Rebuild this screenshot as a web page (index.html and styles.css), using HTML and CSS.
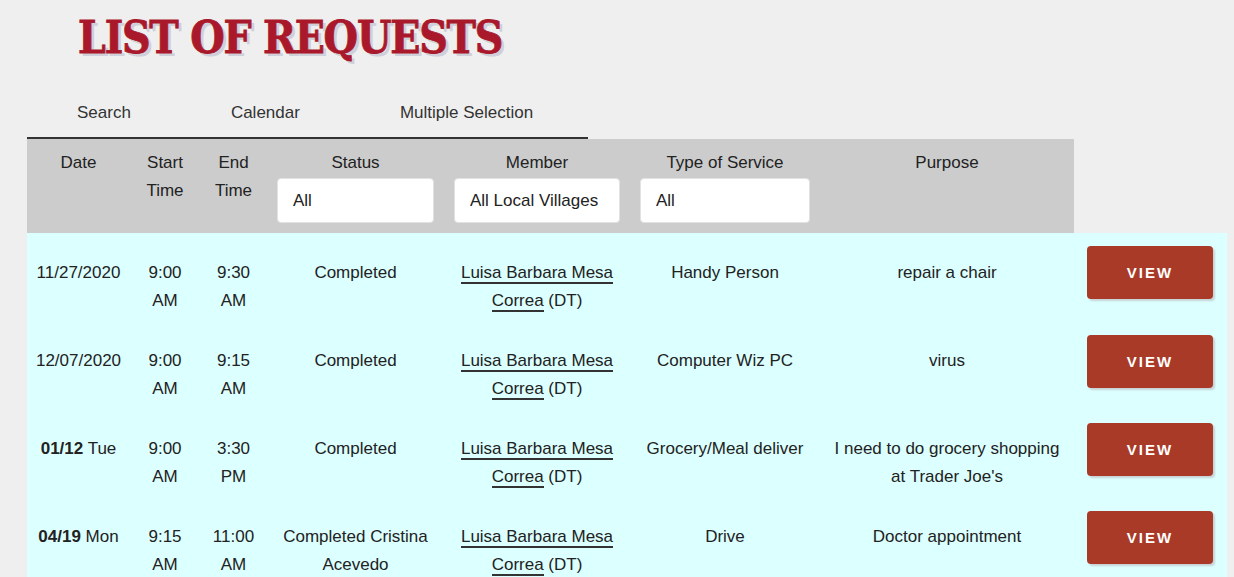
FILE: index.html
```html
<!DOCTYPE html>
<html lang="en">
<head>
    <meta charset="UTF-8">
    <meta name="viewport" content="width=device-width, initial-scale=1.0">
    <title>List of Requests</title>
    <link rel="stylesheet" href="styles.css">
</head>
<body>
    <div class="page">
        <h1 class="page-title">LIST OF REQUESTS</h1>

        <!-- View switcher -->
        <div class="tabs">
            <a class="tab" href="#">Search</a>
            <a class="tab" href="#">Calendar</a>
            <a class="tab" href="#">Multiple Selection</a>
        </div>

        <table class="requests">
            <colgroup>
                <col class="col-date">
                <col class="col-start">
                <col class="col-end">
                <col class="col-status">
                <col class="col-member">
                <col class="col-type">
                <col class="col-purpose">
                <col class="col-action">
            </colgroup>
            <thead>
                <tr>
                    <th class="cell-date">Date</th>
                    <th>Start Time</th>
                    <th>End Time</th>
                    <th>
                        Status
                        <select class="filter"><option>All</option></select>
                    </th>
                    <th>
                        Member
                        <select class="filter"><option>All Local Villages</option></select>
                    </th>
                    <th>
                        Type of Service
                        <select class="filter"><option>All</option></select>
                    </th>
                    <th>Purpose</th>
                    <th class="head-empty"></th>
                </tr>
            </thead>
            <tbody>
                <tr>
                    <td class="cell-date">11/27/2020</td>
                    <td>9:00 AM</td>
                    <td>9:30 AM</td>
                    <td>Completed</td>
                    <td><a class="member-link" href="#">Luisa Barbara Mesa Correa</a> (DT)</td>
                    <td>Handy Person</td>
                    <td>repair a chair</td>
                    <td class="cell-action"><a class="btn-view" href="#">VIEW</a></td>
                </tr>
                <tr>
                    <td class="cell-date">12/07/2020</td>
                    <td>9:00 AM</td>
                    <td>9:15 AM</td>
                    <td>Completed</td>
                    <td><a class="member-link" href="#">Luisa Barbara Mesa Correa</a> (DT)</td>
                    <td>Computer Wiz PC</td>
                    <td>virus</td>
                    <td class="cell-action"><a class="btn-view" href="#">VIEW</a></td>
                </tr>
                <tr>
                    <td class="cell-date"><b>01/12</b> Tue</td>
                    <td>9:00 AM</td>
                    <td>3:30 PM</td>
                    <td>Completed</td>
                    <td><a class="member-link" href="#">Luisa Barbara Mesa Correa</a> (DT)</td>
                    <td>Grocery/Meal deliver</td>
                    <td>I need to do grocery shopping at Trader Joe's</td>
                    <td class="cell-action"><a class="btn-view" href="#">VIEW</a></td>
                </tr>
                <tr>
                    <td class="cell-date"><b>04/19</b> Mon</td>
                    <td>9:15 AM</td>
                    <td>11:00 AM</td>
                    <td>Completed Cristina Acevedo</td>
                    <td><a class="member-link" href="#">Luisa Barbara Mesa Correa</a> (DT)</td>
                    <td>Drive</td>
                    <td>Doctor appointment</td>
                    <td class="cell-action"><a class="btn-view" href="#">VIEW</a></td>
                </tr>
            </tbody>
        </table>
    </div>
</body>
</html>
```

FILE: styles.css
```css
html {
    overflow: hidden;
}
body {
    margin: 0;
    background-color: #efefef;
    font-family: "Liberation Sans", Arial, sans-serif;
    color: #222;
}
.page {
    padding-left: 27px;
}
.page-title {
    margin: 0;
    padding: 13px 0 0 51px;
    font-family: "DejaVu Serif", serif;
    font-stretch: condensed;
    font-weight: bold;
    font-size: 44px;
    line-height: 50px;
    letter-spacing: -1.2px;
    color: #a9192b;
    -webkit-text-stroke: 0.8px #a9192b;
    text-shadow: 3px 3px 0 #cfd0da;
}
.tabs {
    display: flex;
    width: 561px;
    margin-top: 25px;
    border-bottom: 2px solid #333;
}
.tab {
    padding: 15px 50px 14px;
    font-size: 17px;
    line-height: 20px;
    color: #333;
    text-decoration: none;
}
.requests {
    width: 1200px;
    table-layout: fixed;
    border-collapse: collapse;
    font-size: 17px;
    line-height: 28px;
    text-align: center;
}
.col-date { width: 103px; }
.col-start { width: 70px; }
.col-end { width: 67px; }
.col-status { width: 177px; }
.col-member { width: 186px; }
.col-type { width: 190px; }
.col-purpose { width: 254px; }
.col-action { width: 153px; }

.requests th {
    padding: 10px 10px 10px;
    background-color: #cccccc;
    font-weight: normal;
    vertical-align: top;
}
.requests th.head-empty {
    background-color: transparent;
}
.filter {
    display: block;
    width: 100%;
    height: 45px;
    margin-top: 1px;
    padding: 0 15px;
    border: 1px solid #e2e2e2;
    border-radius: 4px;
    background-color: #fff;
    font-family: inherit;
    font-size: 17px;
    color: #222;
    -webkit-appearance: none;
    appearance: none;
}
.requests td {
    padding: 16px 10px;
    background-color: #dcffff;
    vertical-align: top;
}
.requests tbody tr:first-child td {
    padding-top: 26px;
}
.requests .cell-date {
    padding-left: 6px;
    padding-right: 6px;
}
.requests td.cell-action {
    padding-top: 4px;
    padding-left: 13px;
    text-align: left;
}
.requests tbody tr:first-child td.cell-action {
    padding-top: 13px;
}
.member-link {
    color: #222;
    text-decoration: none;
    border-bottom: 2px solid #333;
}
.btn-view {
    display: inline-block;
    width: 126px;
    height: 53px;
    line-height: 53px;
    border-radius: 4px;
    background-color: #a93a27;
    box-shadow: 2px 2px 2px #c6d3d6;
    color: #fff;
    font-size: 15px;
    font-weight: bold;
    letter-spacing: 2px;
    text-align: center;
    text-decoration: none;
}
```
